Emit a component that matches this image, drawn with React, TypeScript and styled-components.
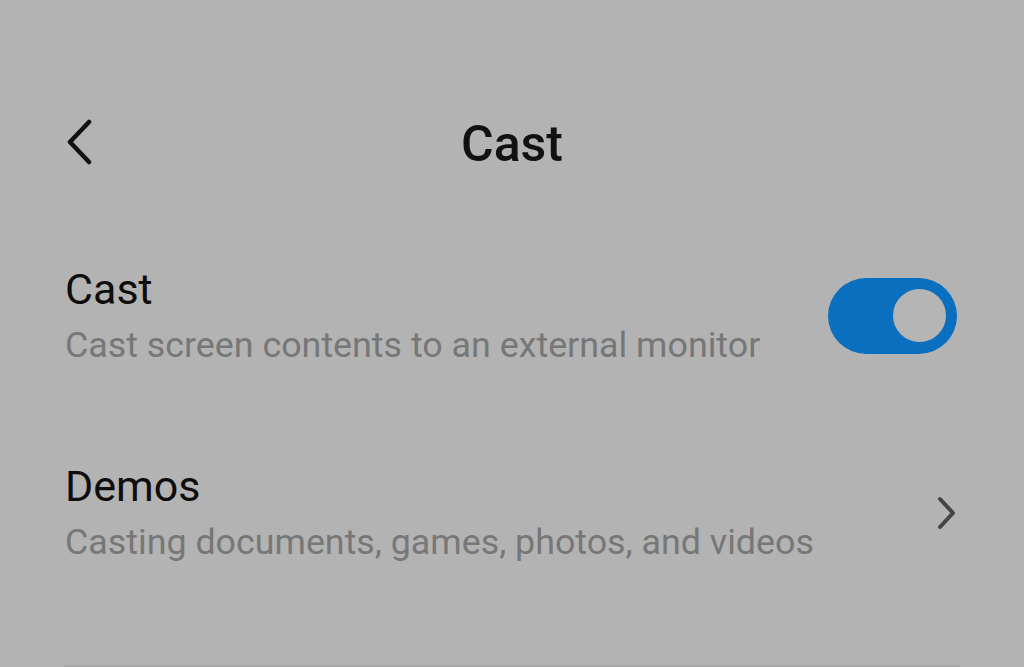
import React from 'react';
import styled, { createGlobalStyle } from 'styled-components';

const GlobalStyle = createGlobalStyle`
  html, body {
    margin: 0;
    padding: 0;
    background: #b3b3b3;
  }
  body {
    font-family: Roboto, "Noto Sans", sans-serif;
    -webkit-font-smoothing: antialiased;
  }
`;

const Screen = styled.div`
  width: 1024px;
  height: 667px;
  background: #b3b3b3;
  overflow: hidden;
  display: flex;
  flex-direction: column;
`;

const Header = styled.header`
  position: relative;
  height: 120px;
  margin-top: 84px;
  display: flex;
  align-items: center;
  justify-content: center;
`;

const BackButton = styled.button`
  position: absolute;
  left: 58px;
  top: 50%;
  transform: translateY(-50%);
  margin-top: -2px;
  background: none;
  border: none;
  padding: 0;
  width: 44px;
  height: 56px;
  display: flex;
  align-items: center;
  justify-content: center;
`;

const Title = styled.h1`
  margin: 0;
  font-size: 50px;
  font-weight: 500;
  color: #111;
  line-height: 1;
`;

const List = styled.div`
  display: flex;
  flex-direction: column;
  padding: 13px 67px 0 65px;
`;

const Row = styled.div`
  display: flex;
  align-items: center;
  justify-content: space-between;
  height: 197px;
`;

const Texts = styled.div`
  display: flex;
  flex-direction: column;
  gap: 6px;
`;

const RowTitle = styled.div`
  font-size: 43px;
  color: #0d0d0d;
  line-height: 52px;
`;

const RowSub = styled.div`
  font-size: 35.8px;
  color: #777;
  line-height: 48px;
`;

const Toggle = styled.div<{ $on: boolean }>`
  width: 129px;
  height: 76px;
  border-radius: 38px;
  background: ${(p) => (p.$on ? '#0b6fbf' : '#888')};
  display: flex;
  align-items: center;
  justify-content: ${(p) => (p.$on ? 'flex-end' : 'flex-start')};
  padding: 0 11px;
  box-sizing: border-box;
`;

const Knob = styled.div`
  width: 53px;
  height: 53px;
  border-radius: 50%;
  background: #b5b5b5;
`;

const ChevronWrap = styled.div`
  display: flex;
  margin-right: -2px;
`;

const Footer = styled.div`
  margin: auto 64px 0;
  height: 2px;
  background: #a9a9a9;
`;

const BackIcon = () => (
  <svg width="30" height="46" viewBox="0 0 30 46">
    <path d="M24 3 L5 23 L24 43" fill="none" stroke="#111" strokeWidth="4.5" strokeLinecap="round" strokeLinejoin="round" />
  </svg>
);

const Chevron = () => (
  <svg width="24" height="34" viewBox="0 0 24 34">
    <path d="M5 3 L18 17 L5 31" fill="none" stroke="#444" strokeWidth="4" strokeLinecap="round" strokeLinejoin="round" />
  </svg>
);

export default function App() {
  return (
    <>
      <GlobalStyle />
      <Screen>
        <Header>
          <BackButton aria-label="Back">
            <BackIcon />
          </BackButton>
          <Title>Cast</Title>
        </Header>
        <List>
          <Row>
            <Texts>
              <RowTitle>Cast</RowTitle>
              <RowSub>Cast screen contents to an external monitor</RowSub>
            </Texts>
            <Toggle $on>
              <Knob />
            </Toggle>
          </Row>
          <Row>
            <Texts>
              <RowTitle>Demos</RowTitle>
              <RowSub>Casting documents, games, photos, and videos</RowSub>
            </Texts>
            <ChevronWrap>
              <Chevron />
            </ChevronWrap>
          </Row>
        </List>
        <Footer />
      </Screen>
    </>
  );
}
